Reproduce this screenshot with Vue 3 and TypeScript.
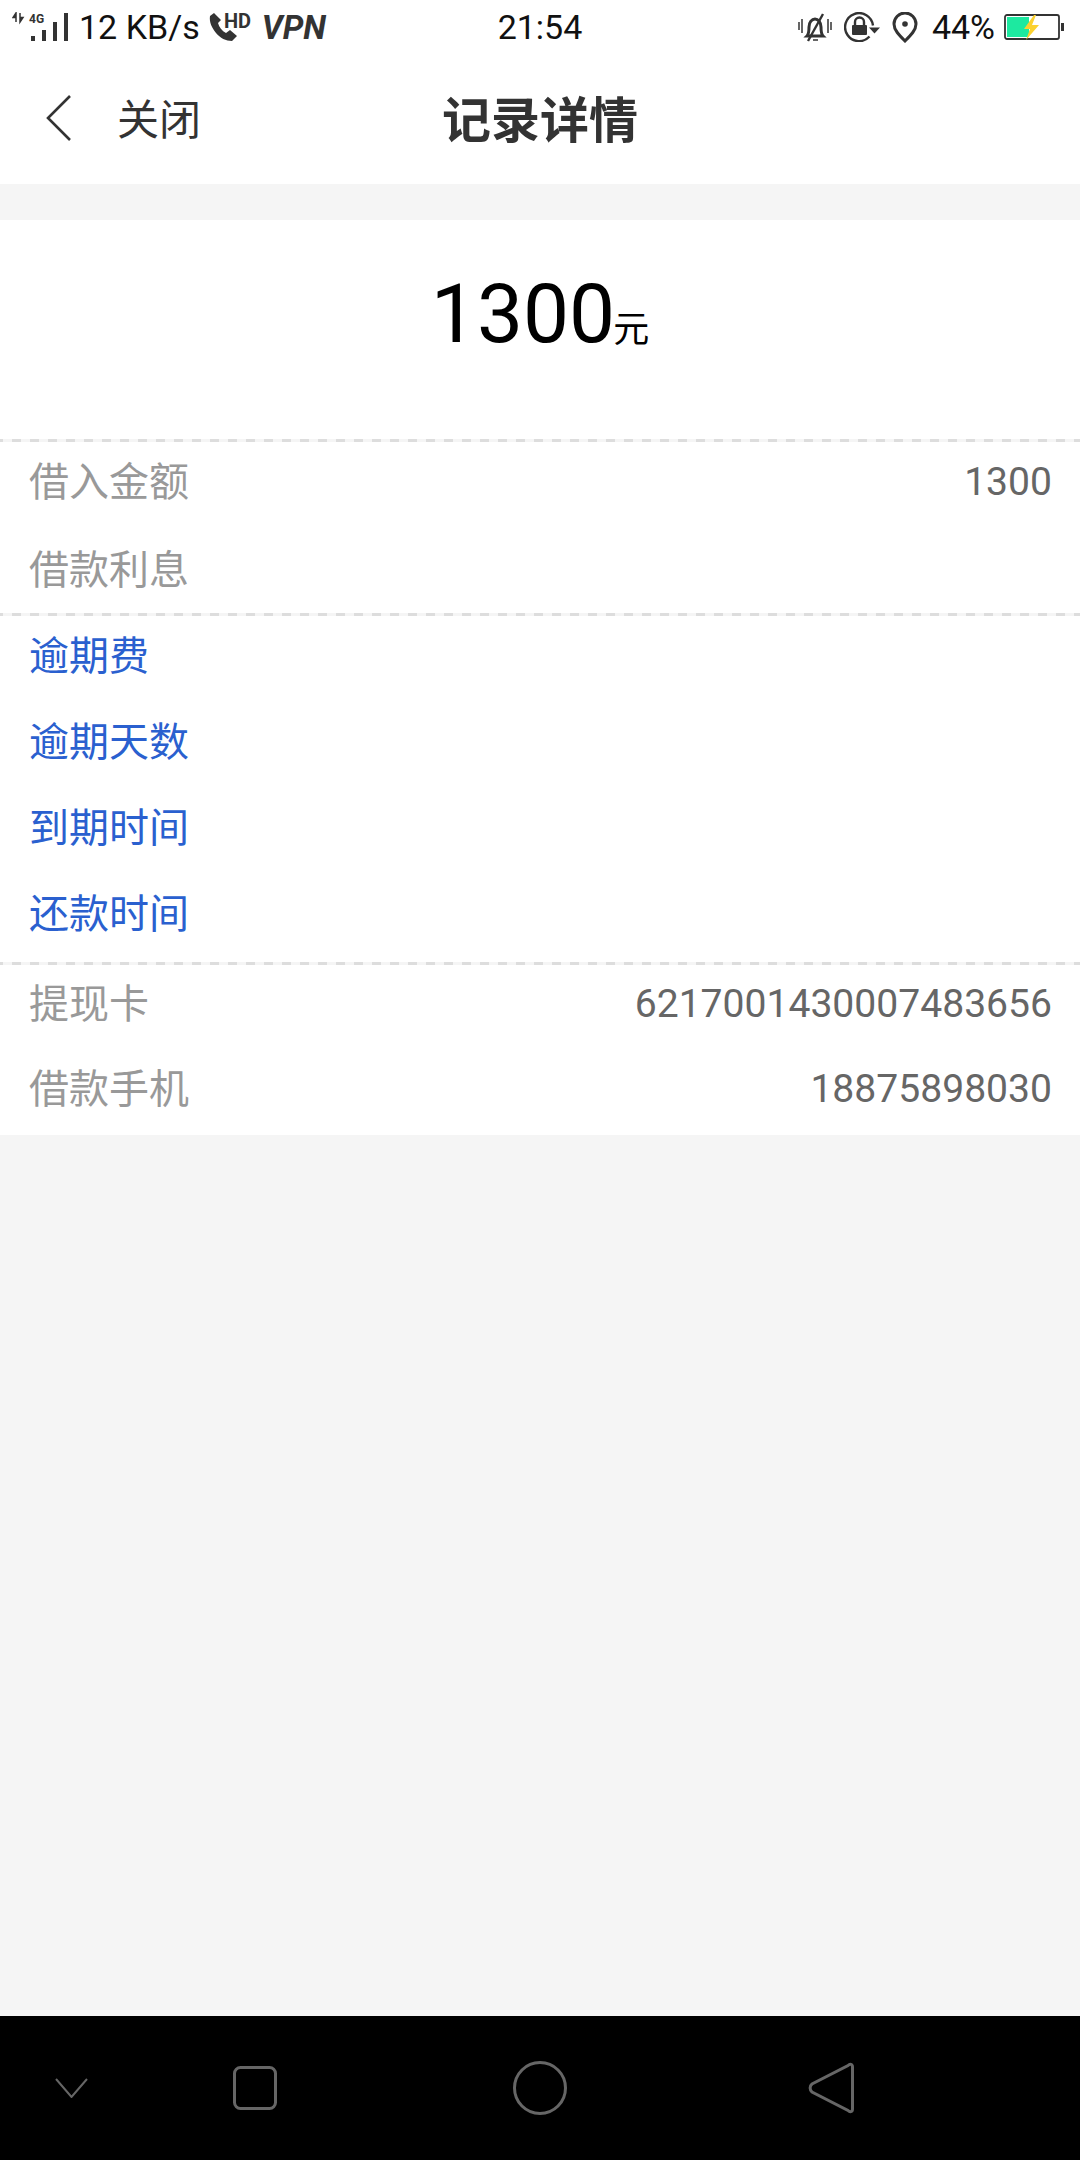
<script setup lang="ts">
interface Row {
  label: string
  value?: string
}

const loanRows: Row[] = [
  { label: '借入金额', value: '1300' },
  { label: '借款利息' },
]
const dueRows: Row[] = [
  { label: '逾期费' },
  { label: '逾期天数' },
  { label: '到期时间' },
  { label: '还款时间' },
]
const cardRows: Row[] = [
  { label: '提现卡', value: '6217001430007483656' },
  { label: '借款手机', value: '18875898030' },
]
</script>

<template>
  <div class="page">
    <div class="status-bar">
      <div class="status-left">
        <svg class="signal" width="58" height="30" viewBox="0 0 58 30">
          <path d="M4 1v9M4 1L1 5.500h3zM8 10V1M8 10l3-4.500H8z" fill="#333" stroke="#333" stroke-width="1.500" />
          <text x="17" y="11" class="tiny">4G</text>
          <rect x="19" y="24" width="4" height="5" fill="#333" />
          <rect x="30" y="18" width="4" height="11" fill="#333" />
          <rect x="41" y="10" width="4" height="19" fill="#333" />
          <rect x="52" y="1" width="4" height="28" fill="#333" />
        </svg>
        <span class="speed">12 KB/s</span>
        <svg class="call" width="48" height="38" viewBox="0 -4 48 38">
          <path d="M5 1L1 4c-1 6 2 12 6 17s10 8 16 8l5-5-7-6-4 3c-4-2-7-6-8-10l3-3z" fill="#333" />
          <text x="15" y="16" class="hd">HD</text>
        </svg>
        <span class="vpn">VPN</span>
      </div>
      <div class="clock">21:54</div>
      <div class="status-right">
        <svg width="34" height="30" viewBox="0 0 34 30" fill="none" stroke="#333">
          <path d="M1 10v8M4 7v14M30 7v14M33 10v8" stroke-width="1.500" />
          <path d="M9 24c2-2 2-5 2-9 0-5 3-8 6-8s6 3 6 8c0 4 0 7 2 9z" stroke-width="3" />
          <path d="M25 2L10 29" stroke-width="2.400" />
          <path d="M15 28h5" stroke-width="1.500" />
        </svg>
        <svg class="gap-lock" width="36" height="30" viewBox="0 0 36 30" fill="none">
          <path d="M29 13.500a14 14 0 1 0-3.500 11" stroke="#333" stroke-width="2.400" />
          <rect x="8" y="13" width="15" height="10" rx="1" fill="#333" />
          <path d="M11 13v-3a4.500 4.500 0 0 1 9 0v3" stroke="#333" stroke-width="2.400" />
          <path d="M25 15.500h11l-5.500 6z" fill="#333" />
        </svg>
        <svg class="gap-pin" width="26" height="31" viewBox="0 0 26 31" fill="none">
          <path d="M13 29C7 23 2 18 2 12a11 11 0 0 1 22 0c0 6-5 11-11 17z" stroke="#333" stroke-width="3" />
          <circle cx="13" cy="12" r="2.800" fill="#333" />
        </svg>
        <span class="percent">44%</span>
        <svg class="gap-battery" width="60" height="26" viewBox="0 0 60 26" fill="none">
          <rect x="1" y="1" width="54" height="24" rx="2" stroke="#333" stroke-width="1.800" />
          <rect x="3" y="3" width="22" height="20" fill="#1de9a0" />
          <rect x="57" y="9" width="3" height="8" fill="#333" />
          <path d="M30 1L20 15h6l-4 11 13-15h-7l4-10z" fill="#fbd130" />
        </svg>
      </div>
    </div>

    <header class="nav-bar">
      <svg class="back" width="26" height="46" viewBox="0 0 26 46" fill="none">
        <path d="M24 1L2 23l22 22" stroke="#333" stroke-width="2.600" />
      </svg>
      <span class="close">关闭</span>
      <h1 class="title">记录详情</h1>
    </header>

    <main class="content">
      <section class="detail">
        <div class="amount">
          <span class="amount-num">1300</span><span class="amount-unit">元</span>
        </div>

        <div class="dash"></div>
        <div class="group group-loan">
          <div v-for="row in loanRows" :key="row.label" class="row">
            <span class="label">{{ row.label }}</span>
            <span class="value">{{ row.value }}</span>
          </div>
        </div>

        <div class="dash"></div>
        <div class="group group-due">
          <div v-for="row in dueRows" :key="row.label" class="row">
            <span class="label blue">{{ row.label }}</span>
            <span class="value">{{ row.value }}</span>
          </div>
        </div>

        <div class="dash"></div>
        <div class="group group-card">
          <div v-for="row in cardRows" :key="row.label" class="row">
            <span class="label">{{ row.label }}</span>
            <span class="value">{{ row.value }}</span>
          </div>
        </div>
      </section>
    </main>

    <footer class="sys-nav">
      <svg class="nav-down" width="33" height="20" viewBox="0 0 33 20" fill="none">
        <path d="M1 1l15.500 18L32 1" stroke="#666" stroke-width="2" />
      </svg>
      <svg class="nav-square" width="44" height="44" viewBox="0 0 44 44" fill="none">
        <rect x="1.500" y="1.500" width="41" height="41" rx="6" stroke="#666" stroke-width="3" />
      </svg>
      <svg class="nav-circle" width="54" height="54" viewBox="0 0 54 54" fill="none">
        <circle cx="27" cy="27" r="25.500" stroke="#666" stroke-width="3" />
      </svg>
      <svg class="nav-tri" width="46" height="52" viewBox="0 0 46 52" fill="none">
        <path d="M40 3.500c2-2 4.500-1.500 4.500 1.500v42c0 3-2.500 3.500-4.500 1.500L4 30c-2.500-2-2.500-6 0-8z" stroke="#666" stroke-width="3" />
      </svg>
    </footer>
  </div>
</template>

<style>
body {
  margin: 0;
}
</style>

<style scoped>
.page {
  width: 1080px;
  height: 2160px;
  display: flex;
  flex-direction: column;
  background: #f5f5f5;
  font-family: Roboto, "Noto Sans CJK SC", sans-serif;
  overflow: hidden;
}

.status-bar {
  height: 56px;
  padding-bottom: 2px;
  box-sizing: border-box;
  background: #fff;
  display: grid;
  grid-template-columns: 1fr auto 1fr;
  align-items: center;
  color: #111;
  font-size: 34px;
}

.status-left,
.status-right {
  display: flex;
  align-items: center;
}

.status-left {
  padding-left: 12px;
}

.status-right {
  justify-content: flex-end;
  padding-right: 16px;
}

.tiny {
  font: 700 12px Roboto, sans-serif;
  fill: #333;
}

.hd {
  font: 700 20px Roboto, sans-serif;
  fill: #333;
}

.speed {
  margin-left: 9px;
}

.call {
  margin-left: 9px;
}

.vpn {
  margin-left: 5px;
  font-weight: 700;
  font-style: italic;
  font-size: 33px;
  color: #333;
}

.gap-lock {
  margin-left: 12px;
}

.gap-pin {
  margin-left: 12px;
}

.percent {
  margin-left: 14px;
}

.gap-battery {
  margin-left: 9px;
}

.nav-bar {
  position: relative;
  height: 128px;
  padding-bottom: 4px;
  box-sizing: border-box;
  background: #fff;
  display: flex;
  align-items: center;
  padding-left: 46px;
  color: #333;
}

.close {
  margin-left: 45px;
  margin-bottom: 4px;
  font-size: 42px;
}

.title {
  position: absolute;
  left: 0;
  right: 0;
  margin: 0 0 4px;
  text-align: center;
  font-size: 49px;
  font-weight: 700;
}

.content {
  flex: 1;
  padding-top: 36px;
}

.detail {
  background: #fff;
}

.amount {
  height: 219px;
  display: flex;
  justify-content: center;
  align-items: baseline;
  padding-top: 46px;
  box-sizing: border-box;
  color: #000;
  line-height: 96px;
}

.amount-num {
  font-size: 82px;
}

.amount-unit {
  font-size: 36px;
  margin-left: -2px;
}

.dash {
  height: 3px;
  background: repeating-linear-gradient(90deg, #ddd 0 9px, #f5f5f5 9px 18px) 12px 0;
}

.group {
  display: flex;
  flex-direction: column;
  padding: 0 28px 0 29px;
}

.group-loan {
  gap: 48px;
  padding-top: 17px;
  padding-bottom: 26px;
}

.group-due {
  gap: 46px;
  padding-top: 17px;
  padding-bottom: 31px;
}

.group-card {
  gap: 45px;
  padding-top: 16px;
  padding-bottom: 29px;
}

.row {
  height: 40px;
  display: flex;
  justify-content: space-between;
  align-items: center;
}

.label {
  font-size: 40px;
  color: #999;
}

.blue {
  color: #2a60cf;
}

.value {
  margin-top: 5px;
  font-size: 39.1px;
  color: #666;
}

.sys-nav {
  height: 144px;
  flex: none;
  background: #000;
  display: flex;
  align-items: center;
}

.nav-down {
  margin-left: 55px;
}

.nav-square {
  margin-left: 145px;
}

.nav-circle {
  margin-left: 236px;
}

.nav-tri {
  margin-left: 241px;
}
</style>
